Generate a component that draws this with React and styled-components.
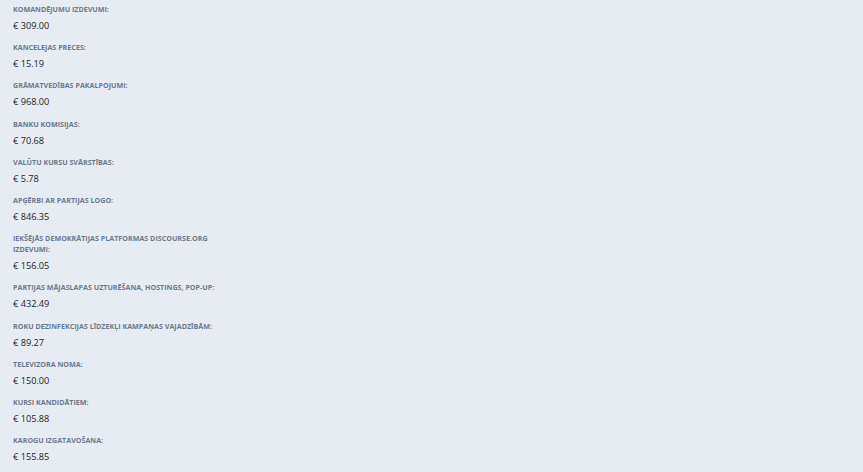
import React from "react";
import styled, { createGlobalStyle } from "styled-components";

const Global = createGlobalStyle`
  html, body { margin: 0; padding: 0; background: #e7ecf2; }
  body { font-family: "Open Sans", "Noto Sans", sans-serif; }
`;

const Page = styled.div`
  min-height: 472px;
  background: #e7ecf2;
  padding: 4px 0 0 13px;
  box-sizing: border-box;
`;

const List = styled.dl`
  margin: 0;
  width: 222px;
  display: flex;
  flex-direction: column;
  gap: 10.2px;
`;

const Item = styled.div`
  display: flex;
  flex-direction: column;
  gap: 4px;
`;

const Label = styled.dt`
  margin: 0;
  font-size: 7.15px;
  line-height: 11px;
  font-weight: 700;
  text-transform: uppercase;
  color: #6b798d;
`;

const Value = styled.dd`
  margin: 0;
  font-size: 9.2px;
  line-height: 13px;
  color: #1c232c;
`;

const items = [
  ["Komandējumu izdevumi:", "309.00"],
  ["Kancelejas preces:", "15.19"],
  ["Grāmatvedības pakalpojumi:", "968.00"],
  ["Banku komisijas:", "70.68"],
  ["Valūtu kursu svārstības:", "5.78"],
  ["Apģērbi ar partijas logo:", "846.35"],
  ["Iekšējās demokrātijas platformas discourse.org izdevumi:", "156.05"],
  ["Partijas mājaslapas uzturēšana, hostings, pop-up:", "432.49"],
  ["Roku dezinfekcijas līdzekļi kampaņas vajadzībām:", "89.27"],
  ["Televizora noma:", "150.00"],
  ["Kursi kandidātiem:", "105.88"],
  ["Karogu izgatavošana:", "155.85"],
];

export default function App() {
  return (
    <Page>
      <Global />
      <List>
        {items.map(([label, value]) => (
          <Item key={label}>
            <Label>{label}</Label>
            <Value>€ {value}</Value>
          </Item>
        ))}
      </List>
    </Page>
  );
}
